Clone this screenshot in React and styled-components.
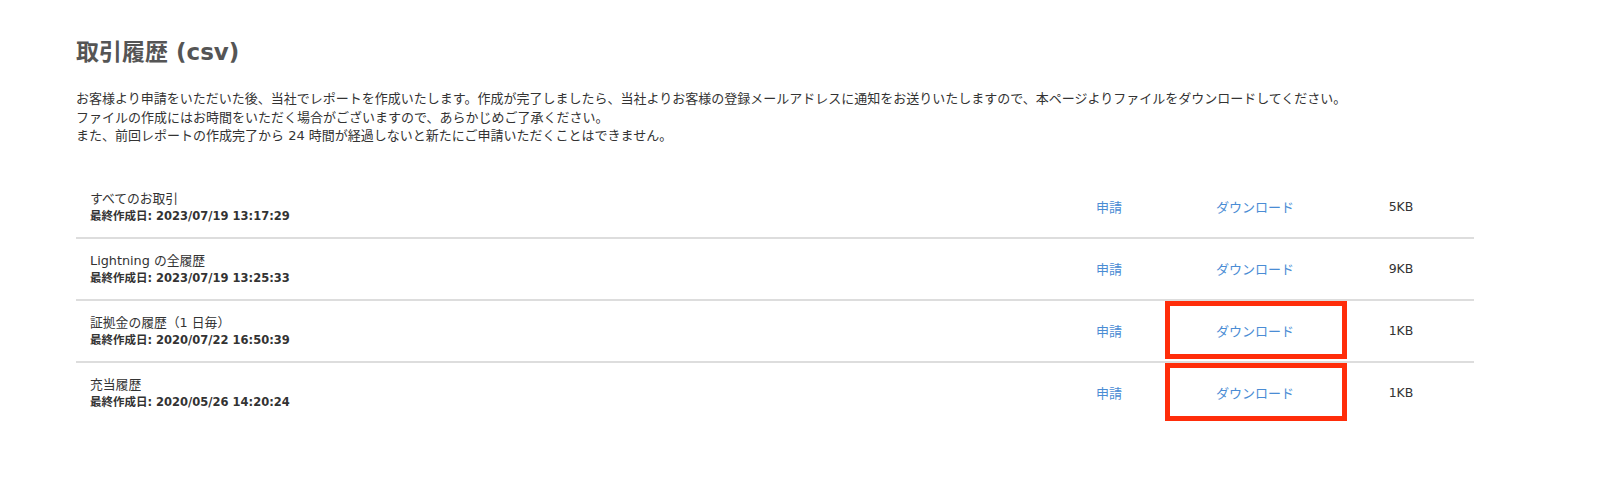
import React from "react";
import styled, { createGlobalStyle } from "styled-components";

const GlobalStyle = createGlobalStyle`
  body {
    margin: 0;
    background: #fff;
    font-family: "DejaVu Sans", "Noto Sans CJK JP", sans-serif;
    color: #333;
  }
`;

const reports = [
  { name: "すべてのお取引", date: "2023/07/19 13:17:29", size: "5KB" },
  { name: "Lightning の全履歴", date: "2023/07/19 13:25:33", size: "9KB" },
  { name: "証拠金の履歴（1 日毎）", date: "2020/07/22 16:50:39", size: "1KB", marked: true },
  { name: "充当履歴", date: "2020/05/26 14:20:24", size: "1KB", marked: true },
];

const Page = styled.main`
  padding: 36px 0 0 76px;
  width: 1398px;
`;

const Title = styled.h1`
  margin: 0;
  font-size: 23px;
  line-height: 32px;
  font-weight: 700;
  color: #555;
`;

const Notice = styled.div`
  margin-top: 22px;
  font-size: 13px;
  line-height: 18.5px;
  color: #333;
`;

const Table = styled.div`
  margin-top: 31px;
  display: flex;
  flex-direction: column;
`;

const Row = styled.div`
  display: grid;
  grid-template-columns: 1fr 146px 146px 146px;
  align-items: center;
  height: 60px;
  border-top: ${({ $first }) => ($first ? "none" : "2px solid #ddd")};
`;

const NameCell = styled.div`
  padding-left: 14px;
  display: flex;
  flex-direction: column;
  gap: 1px;
`;

const Name = styled.span`
  font-size: 12.8px;
  line-height: 17px;
  color: #333;
`;

const Updated = styled.span`
  font-size: 11.5px;
  line-height: 16px;
  font-weight: 700;
  color: #333;
`;

const LinkCell = styled.div`
  position: relative;
  height: 100%;
  display: flex;
  align-items: center;
  justify-content: center;
`;

const Link = styled.a`
  font-size: 13px;
  color: #4a8cd4;
  text-decoration: none;
  cursor: pointer;
`;

const Marker = styled.span`
  position: absolute;
  top: 0;
  bottom: 2px;
  left: -17px;
  right: -19px;
  border: 5px solid #ff2d0a;
  pointer-events: none;
`;

const Size = styled.div`
  font-size: 12.5px;
  text-align: center;
  color: #333;
`;

export default function App() {
  return (
    <>
      <GlobalStyle />
      <Page>
        <Title>取引履歴 (csv)</Title>
        <Notice>
          お客様より申請をいただいた後、当社でレポートを作成いたします。作成が完了しましたら、当社よりお客様の登録メールアドレスに通知をお送りいたしますので、本ページよりファイルをダウンロードしてください。
          <br />
          ファイルの作成にはお時間をいただく場合がございますので、あらかじめご了承ください。
          <br />
          また、前回レポートの作成完了から 24 時間が経過しないと新たにご申請いただくことはできません。
        </Notice>
        <Table>
          {reports.map((r, i) => (
            <Row key={r.name} $first={i === 0}>
              <NameCell>
                <Name>{r.name}</Name>
                <Updated>最終作成日: {r.date}</Updated>
              </NameCell>
              <LinkCell>
                <Link>申請</Link>
              </LinkCell>
              <LinkCell>
                <Link>ダウンロード</Link>
                {r.marked && <Marker />}
              </LinkCell>
              <Size>{r.size}</Size>
            </Row>
          ))}
        </Table>
      </Page>
    </>
  );
}
